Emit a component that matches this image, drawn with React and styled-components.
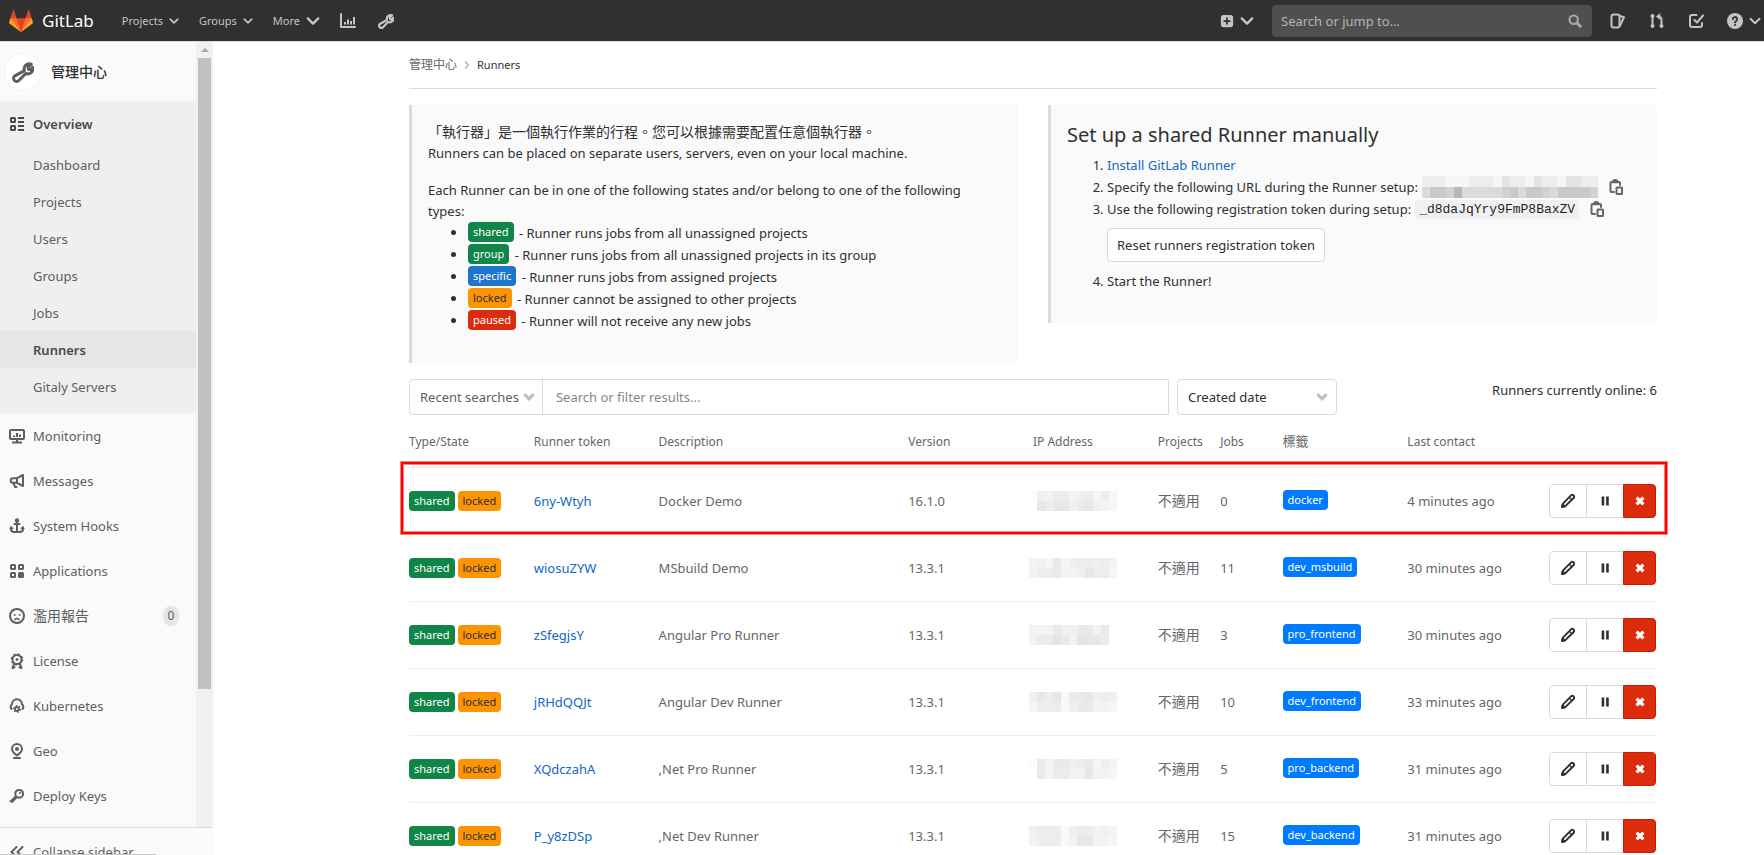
import React from "react";
import styled, { createGlobalStyle, css } from "styled-components";

const GlobalStyle = createGlobalStyle`
  * {
    box-sizing: border-box;
  }
  body {
    margin: 0;
    background: #fff;
    color: #303030;
    font-family: "Noto Sans", "Noto Sans CJK TC", sans-serif;
    font-size: 13px;
    line-height: 22px;
    overflow: hidden;
  }
  button,
  input,
  select {
    font: inherit;
    color: inherit;
    margin: 0;
  }
  a {
    color: #1068bf;
    text-decoration: none;
  }
`;

const stroke = {
  fill: "none",
  stroke: "currentColor",
  strokeWidth: 2,
  strokeLinecap: "round",
  strokeLinejoin: "round",
};

const icons = {
  chevron: <path d="M2 5l6 6 6-6" {...stroke} strokeWidth="2.6" />,
  caret: <path d="M3 5.500l5 5 5-5" {...stroke} strokeWidth="4.200" strokeLinejoin="miter" />,
  chart: (
    <g {...stroke}>
      <path d="M1 1v13h14" />
      <path d="M5 11.500V9M8 11.500V6.500M11 11.500V8M14 11.500V4" strokeLinecap="butt" />
    </g>
  ),
  wrench: (
    <g>
      <path
        d="M9 7a3.800 3.800 0 0 1 5-4.700l-2.300 2.200.3 1.600 1.600.3 1.500-1.800a3.800 3.800 0 0 1-5.100 4.500L5 14.200a2 2 0 0 1-3.200-3.200z"
        {...stroke}
        strokeWidth="2.200"
      />
    </g>
  ),
  plus: (
    <path
      fillRule="evenodd"
      fill="currentColor"
      d="M4 1h8a3 3 0 0 1 3 3v8a3 3 0 0 1-3 3H4a3 3 0 0 1-3-3V4a3 3 0 0 1 3-3zm3 3v3H4v2h3v3h2V9h3V7H9V4z"
    />
  ),
  search: (
    <g {...stroke}>
      <circle cx="6.500" cy="6.500" r="4.800" strokeWidth="2.400" />
      <path d="M10.500 10.500l3.500 3.500" strokeWidth="3.400" />
    </g>
  ),
  issues: (
    <g {...stroke}>
      <rect x="1.500" y="1.500" width="8" height="13" rx="2" />
      <path d="M10 3l4 1.200L10 12.500" />
    </g>
  ),
  merge: (
    <g {...stroke}>
      <path d="M3.500 3v10M12.500 13V6.500a3 3 0 0 0-3-3H8.500" />
      <path d="M10.500 1L8 3.500 10.500 6z" fill="currentColor" strokeWidth="1" />
      <circle cx="3.500" cy="3" r="1" />
      <circle cx="3.500" cy="13" r="1" />
      <circle cx="12.500" cy="13" r="1" />
    </g>
  ),
  todo: (
    <g {...stroke}>
      <path d="M8.500 2H4a2 2 0 0 0-2 2v8a2 2 0 0 0 2 2h8a2 2 0 0 0 2-2v-2" />
      <path d="M6.500 7L9 9.500 15 2.500" />
    </g>
  ),
  help: (
    <g>
      <circle cx="8" cy="8" r="8" fill="currentColor" />
      <path d="M5.800 6.200a2.200 2.200 0 1 1 3.300 1.900C8.300 8.500 8 8.800 8 9.400" {...stroke} stroke="#303030" strokeWidth="1.800" />
      <circle cx="8" cy="12" r="1.100" fill="#303030" />
    </g>
  ),
  overview: (
    <g {...stroke} strokeLinejoin="miter" strokeLinecap="butt">
      <rect x="2" y="2" width="4" height="4" rx=".5" />
      <rect x="2" y="10" width="4" height="4" rx=".5" />
      <path d="M9 2h6M9 6h6M9 10h6M9 14h6" />
    </g>
  ),
  monitor: (
    <g {...stroke}>
      <rect x="1" y="2" width="14" height="9" rx="1" />
      <path d="M3 14.500h10M8 11v3M5 9V7.500M8 9V5M11 9V6.500" strokeLinecap="butt" />
    </g>
  ),
  messages: (
    <g {...stroke}>
      <path d="M14 2v11L8 9.800H4A2.200 2.200 0 0 1 4 5.200h4z" />
      <path d="M8 5.200v4.600M4.500 10l1.500 4h1.500" />
    </g>
  ),
  hook: (
    <g {...stroke}>
      <circle cx="8" cy="2.500" r="1.200" fill="currentColor" />
      <path d="M8 4v10M5.500 6h5M2 9.500v1.500c0 2 1.800 3 3.500 3h5c1.700 0 3.500-1 3.500-3V9.500" />
      <path d="M1 10.500L2 9l2 1.500M15 10.500L14 9l-2 1.500" strokeWidth="1.200" />
    </g>
  ),
  apps: (
    <g {...stroke}>
      <rect x="2" y="2" width="4" height="4" rx=".5" />
      <rect x="10" y="2" width="4" height="4" rx=".5" />
      <rect x="2" y="10" width="4" height="4" rx=".5" />
      <rect x="10" y="10" width="4" height="4" rx=".5" fill="currentColor" />
    </g>
  ),
  abuse: (
    <g {...stroke}>
      <circle cx="8" cy="8" r="7" />
      <path d="M6 11.500a2.400 2.400 0 0 1 4 0" strokeWidth="1.600" />
      <circle cx="5.500" cy="7" r=".5" strokeWidth="1" />
      <circle cx="10.500" cy="7" r=".5" strokeWidth="1" />
    </g>
  ),
  license: (
    <g {...stroke}>
      <circle cx="8" cy="6.500" r="4.500" />
      <circle cx="8" cy="6.500" r="5.600" strokeWidth="1.400" strokeDasharray="2 2.400" strokeLinecap="butt" />
      <circle cx="8" cy="6.500" r="1" strokeWidth="1" fill="currentColor" />
      <path d="M5 11l-1.500 4 2-.8M11 11l1.500 4-2-.8" />
    </g>
  ),
  kubernetes: (
    <g {...stroke}>
      <path d="M2.500 11A3.200 3.200 0 0 1 3 6.200a5 5 0 0 1 10 0 3.200 3.200 0 0 1 .5 4.800" />
      <circle cx="8" cy="11" r="2" />
      <circle cx="8" cy="11" r="3.400" strokeWidth="1.200" strokeDasharray="1.500 2.060" strokeLinecap="butt" />
    </g>
  ),
  geo: (
    <g {...stroke}>
      <path d="M8 12.500C4.500 10 3 8.200 3 6a5 5 0 0 1 10 0c0 2.200-1.500 4-5 6.500zM5 15h6" />
      <circle cx="8" cy="6" r="1" fill="currentColor" />
    </g>
  ),
  key: (
    <g {...stroke}>
      <circle cx="10.200" cy="5.800" r="3.900" />
      <path d="M7.200 8.800L2 14M2 14v-1" strokeWidth="3.200" strokeLinecap="butt" />
      <circle cx="11" cy="5" r=".8" fill="currentColor" strokeWidth=".6" />
    </g>
  ),
  collapse: <path d="M7.500 3L2.500 8l5 5M13.500 3l-5 5 5 5" {...stroke} />,
  copy: (
    <g {...stroke} strokeLinejoin="miter">
      <path d="M6 13H3.500a1 1 0 0 1-1-1V4a1 1 0 0 1 1-1h7.500a1 1 0 0 1 1 1v2" />
      <path d="M5 3.200a2.200 2.200 0 0 1 4.400 0z" fill="currentColor" />
      <rect x="8.500" y="8.500" width="5.500" height="6.500" rx=".5" />
    </g>
  ),
  pencil: (
    <g {...stroke}>
      <path d="M2.500 13.500l.6-3.100 7.900-8a1.800 1.800 0 0 1 2.600 2.600l-8 7.900z" />
      <path d="M9.500 4.500l2 2" strokeWidth="1.200" />
      <path d="M2 14l.5-2.500L4.500 13.500z" fill="currentColor" />
    </g>
  ),
  pause: <path d="M3.500 2h3.500v12H3.500zM9.500 2H13v12H9.500z" fill="currentColor" />,
  close: <path d="M3.500 3.500l9 9M12.500 3.500l-9 9" {...stroke} strokeWidth="4.400" strokeLinecap="butt" />,
};

const Svg = styled.svg`
  flex: none;
  display: block;
`;

const Icon = ({ name, size = 16 }) => (
  <Svg width={size} height={size} viewBox="0 0 16 16" aria-hidden="true">
    {icons[name]}
  </Svg>
);

const Logo = () => (
  <Svg width="24" height="24" viewBox="0 0 36 36" aria-hidden="true">
    <path fill="#e24329" d="M2 14l9.380 9v-9l-4-12.280c-.205-.632-1.176-.632-1.380 0z" />
    <path fill="#e24329" d="M34 14l-9.380 9v-9l4-12.280c.205-.632 1.176-.632 1.380 0z" />
    <path fill="#e24329" d="M18 34.380L3 14h30z" />
    <path fill="#fc6d26" d="M18 34.380L11.380 14H2l4 11z" />
    <path fill="#fc6d26" d="M18 34.380L24.620 14H34l-4 11z" />
    <path fill="#fca326" d="M2 14L.1 20.160c-.18.565 0 1.200.5 1.560l17.420 12.660z" />
    <path fill="#fca326" d="M34 14l1.900 6.160c.18.565 0 1.200-.5 1.560L18 34.380z" />
  </Svg>
);

const Page = styled.div`
  display: flex;
  flex-direction: column;
  height: 100vh;
`;

const Navbar = styled.header`
  display: flex;
  align-items: center;
  justify-content: space-between;
  flex: none;
  height: 42px;
  padding: 0 3px 0 9px;
  background: #303030;
  border-bottom: 1px solid #dbdbdb;
  color: #c4c4c4;
`;

const NavGroup = styled.div`
  display: flex;
  align-items: center;
  gap: ${(p) => p.$gap}px;
`;

const Brand = styled.a`
  display: flex;
  align-items: center;
  gap: 9px;
  margin-right: 8px;
  color: #fff;
  font-size: 17px;
`;

const NavButton = styled.button`
  display: flex;
  align-items: center;
  gap: 6px;
  padding: 0;
  border: 0;
  background: none;
  font-size: 11px;
`;

const SearchBox = styled.label`
  display: flex;
  align-items: center;
  width: 320px;
  height: 32px;
  padding: 0 10px 0 9px;
  border-radius: 4px;
  background: #4f4f4f;
  color: #a8a8a8;
`;

const TextInput = styled.input`
  flex: 1;
  min-width: 0;
  padding: 0;
  border: 0;
  outline: 0;
  background: none;
  &::placeholder {
    color: ${(p) => p.$placeholder};
    opacity: 1;
  }
`;

const Body = styled.div`
  display: flex;
  flex: 1;
  min-height: 0;
`;

const Sidebar = styled.aside`
  position: relative;
  display: flex;
  flex-direction: column;
  flex: none;
  width: 213px;
  background: #fafafa;
  color: #5e5e5e;
`;

const SidebarScroll = styled.div`
  display: flex;
  flex: 1;
  min-height: 0;
`;

const SidebarNav = styled.nav`
  flex: 1;
  overflow: hidden;
`;

const Scrollbar = styled.div`
  display: flex;
  flex-direction: column;
  align-items: center;
  width: 17px;
  padding-top: 6px;
  gap: 6px;
  background: #f1f1f1;
`;

const ScrollArrow = styled.div`
  border: 4px solid transparent;
  border-top-width: 0;
  border-bottom-color: #a3a3a3;
`;

const ScrollThumb = styled.div`
  width: 13px;
  height: 81%;
  background: #c1c1c1;
`;

const ContextHeader = styled.a`
  display: flex;
  align-items: center;
  gap: 9px;
  height: 59px;
  padding-left: 4px;
  color: #303030;
  font-size: 14px;
  font-weight: 500;
`;

const Avatar = styled.span`
  display: grid;
  place-items: center;
  width: 38px;
  height: 38px;
  border: 1px solid #f2f2f2;
  border-radius: 50%;
  background: #fff;
  color: #5e5e5e;
`;

const OpenSection = styled.div`
  padding-bottom: 8px;
  background: #efefef;
`;

const SideLink = styled.a`
  display: flex;
  align-items: center;
  gap: 8px;
  height: 45px;
  padding: 0 17px 0 9px;
  color: inherit;
  ${(p) =>
    p.$active &&
    css`
      color: #4a4a4a;
      font-weight: 600;
    `}
`;

const SubLink = styled.a`
  display: flex;
  align-items: center;
  height: 37px;
  padding-left: 33px;
  color: inherit;
  ${(p) =>
    p.$active &&
    css`
      background: #e6e6e6;
      color: #4a4a4a;
      font-weight: 600;
    `}
`;

const Counter = styled.span`
  margin-left: auto;
  width: 16px;
  border-radius: 10px;
  background: #e6e6e6;
  font-size: 12px;
  line-height: 20px;
  text-align: center;
`;

const CollapseButton = styled.button`
  display: flex;
  align-items: flex-start;
  flex: none;
  gap: 8px;
  height: 28px;
  padding: 13px 0 0 9px;
  overflow: hidden;
  border: 0;
  border-top: 1px solid #dbdbdb;
  background: #fafafa;
  & svg {
    margin-top: 3px;
  }
`;

const StatusEdge = styled.div`
  position: absolute;
  left: 0;
  bottom: 0;
  width: 156px;
  height: 1px;
  background: #c8c8c8;
`;

const Main = styled.main`
  flex: 1;
  min-width: 0;
  padding: 0 107px 0 196px;
`;

const Cjk = styled.span`
  font-size: ${(p) => p.$size || 14}px;
`;

const Breadcrumb = styled.nav`
  display: flex;
  align-items: center;
  gap: 6px;
  height: 47px;
  margin-bottom: 16px;
  border-bottom: 1px solid #dbdbdb;
  font-size: 11px;
  & a {
    color: #666;
  }
  & svg {
    color: #a8a8a8;
    transform: rotate(-90deg);
  }
`;

const Panels = styled.div`
  display: flex;
  align-items: flex-start;
  gap: 30px;
  margin-bottom: 16px;
`;

const badgeColors = {
  shared: ["#108548", "#fff"],
  group: ["#108548", "#fff"],
  specific: ["#1f75cb", "#fff"],
  locked: ["#fc9403", "#303030"],
  paused: ["#dd2b0e", "#fff"],
  tag: ["#007bff", "#fff"],
};

const Badge = styled.span`
  display: inline-block;
  padding: 0 5px;
  border-radius: 4px;
  background: ${(p) => badgeColors[p.$kind][0]};
  color: ${(p) => badgeColors[p.$kind][1]};
  font-size: 11px;
  line-height: 20px;
  vertical-align: top;
`;

const Panel = styled.section`
  flex: 1;
  height: ${(p) => p.$height}px;
  padding: 16px 32px 16px 16px;
  border-left: 3px solid #dbdbdb;
  background: #fafafa;
  line-height: 21px;
  & h4 {
    margin: 0 0 5px;
    font-size: 20px;
    font-weight: 400;
    line-height: 28px;
  }
  & p {
    margin: 0 0 16px;
  }
  & ul,
  & ol {
    margin: 0;
    padding-left: 40px;
    line-height: 22px;
  }
`;

const TypeList = styled.ul`
  & li::marker {
    font-size: 14px;
  }
  & ${Badge} {
    margin-right: 2px;
  }
`;

const Step = styled.div`
  display: flex;
  align-items: center;
  gap: 4px;
  white-space: nowrap;
`;

const Code = styled.code`
  padding: 0 4px;
  border-radius: 4px;
  background: #f0f0f0;
  color: #1f1f1f;
  font-family: "Liberation Mono", monospace;
  font-size: 13px;
  line-height: 19px;
`;

const CopyButton = styled.button`
  margin-left: 6px;
  padding: 0;
  border: 0;
  background: none;
  color: #666;
`;

const ResetButton = styled.button`
  display: block;
  height: 34px;
  margin: 8px 0;
  padding: 0 9px;
  border: 1px solid #dbdbdb;
  border-radius: 4px;
  background: #fff;
`;

const MosaicGrid = styled.div`
  display: grid;
  grid-template-columns: repeat(${(p) => p.$columns}, 8px);
  grid-auto-rows: ${(p) => p.$rowHeight}px;
  width: max-content;
`;

const Mosaic = ({ rows, step = 3, rowHeight = 10 }) => (
  <MosaicGrid $columns={rows[0].length} $rowHeight={rowHeight}>
    {rows
      .join("")
      .split("")
      .map((level, index) => {
        const value = 255 - Number(level) * step;
        return <div key={index} style={{ background: `rgb(${value}, ${value}, ${value})` }} />;
      })}
  </MosaicGrid>
);

const Filters = styled.form`
  display: flex;
  align-items: flex-start;
  height: 36px;
`;

const FilterBar = styled.div`
  display: flex;
  flex: 1;
  max-width: 760px;
  height: 36px;
  margin-right: 8px;
  border: 1px solid #dbdbdb;
  border-radius: 4px 0 0 4px;
  & input {
    padding-left: 13px;
  }
`;

const RecentButton = styled.button`
  display: flex;
  align-items: center;
  gap: 4px;
  padding: 0 7px 0 10px;
  border: 0;
  border-right: 1px solid #dbdbdb;
  background: none;
  color: #5e5e5e;
  & svg {
    color: #bfbfbf;
  }
`;

const SortBox = styled.div`
  display: grid;
  align-items: center;
  width: 160px;
  height: 36px;
  color: #bfbfbf;
  & > * {
    grid-area: 1 / 1;
  }
  & svg {
    justify-self: end;
    margin-right: 9px;
    pointer-events: none;
  }
`;

const SortSelect = styled.select`
  height: 100%;
  padding: 0 10px;
  border: 1px solid #dbdbdb;
  border-radius: 4px;
  background: #fff;
  color: #303030;
  appearance: none;
`;

const Online = styled.span`
  margin-left: auto;
`;

const Table = styled.table`
  width: 100%;
  table-layout: fixed;
  border-collapse: collapse;
  color: #666;
  & th {
    height: 52px;
    padding: 2px 0 0;
    font-size: 12px;
    font-weight: 400;
    text-align: left;
  }
  & td {
    height: 67px;
    padding: 0;
    border-top: 1px solid #eee;
    white-space: nowrap;
  }
  & ${MosaicGrid} {
    margin-left: -4px;
  }
`;

const Row = styled.tr`
  position: relative;
`;

const Highlight = styled.div`
  position: absolute;
  inset: -5px -10px 0 -8px;
  border: 2px solid #f00;
  box-shadow: 0 0 0 1px #ff7f7f, inset 0 0 0 1px #ff7f7f;
  pointer-events: none;
`;

const Badges = styled.div`
  display: flex;
  gap: 3px;
`;

const Actions = styled.div`
  display: flex;
  justify-content: flex-end;
  padding-right: 1px;
`;

const ActionButton = styled.button`
  display: grid;
  place-items: center;
  width: ${(p) => (p.$danger ? 33 : 38)}px;
  height: 34px;
  margin-left: -1px;
  padding: 0;
  border: 1px solid ${(p) => (p.$danger ? "#c91c00" : "#dbdbdb")};
  background: ${(p) => (p.$danger ? "#dd2b0e" : "#fff")};
  color: ${(p) => (p.$danger ? "#fff" : "#303030")};
  &:first-child {
    border-radius: 4px 0 0 4px;
  }
  &:last-child {
    border-radius: 0 4px 4px 0;
  }
`;

const overviewLinks = ["Dashboard", "Projects", "Users", "Groups", "Jobs", "Runners", "Gitaly Servers"];

const sideLinks = [
  { icon: "monitor", label: "Monitoring" },
  { icon: "messages", label: "Messages" },
  { icon: "hook", label: "System Hooks" },
  { icon: "apps", label: "Applications" },
  { icon: "abuse", label: <Cjk>濫用報告</Cjk>, count: 0 },
  { icon: "license", label: "License" },
  { icon: "kubernetes", label: "Kubernetes" },
  { icon: "geo", label: "Geo" },
  { icon: "key", label: "Deploy Keys" },
];

const types = [
  ["shared", "Runner runs jobs from all unassigned projects"],
  ["group", "Runner runs jobs from all unassigned projects in its group"],
  ["specific", "Runner runs jobs from assigned projects"],
  ["locked", "Runner cannot be assigned to other projects"],
  ["paused", "Runner will not receive any new jobs"],
];

const columns = [
  ["Type/State", 10],
  ["Runner token", 10],
  ["Description", 20],
  ["Version", 10],
  ["IP Address", 10],
  ["Projects", 5],
  ["Jobs", 5],
  [<Cjk $size={13}>標籤</Cjk>, 10],
  ["Last contact", 10],
  ["", 10],
];

const runners = [
  { token: "6ny-Wtyh", name: "Docker Demo", version: "16.1.0", jobs: 0, tag: "docker", contact: "4 minutes ago", ip: ["15466456363", "08688578543"], highlight: true },
  { token: "wiosuZYW", name: "MSbuild Demo", version: "13.3.1", jobs: 11, tag: "dev_msbuild", contact: "30 minutes ago", ip: ["45373566564", "46674458663"] },
  { token: "zSfegjsY", name: "Angular Pro Runner", version: "13.3.1", jobs: 3, tag: "pro_frontend", contact: "30 minutes ago", ip: ["4447557747", "4679749886"] },
  { token: "jRHdQQJt", name: "Angular Dev Runner", version: "13.3.1", jobs: 10, tag: "dev_frontend", contact: "33 minutes ago", ip: ["58682778565", "36662577443"] },
  { token: "XQdczahA", name: ",Net Pro Runner", version: "13.3.1", jobs: 5, tag: "pro_backend", contact: "31 minutes ago", ip: ["17477567364", "07466448443"] },
  { token: "P_y8zDSp", name: ",Net Dev Runner", version: "13.3.1", jobs: 15, tag: "dev_backend", contact: "31 minutes ago", ip: ["56662566454", "46662488443"] },
];

const TopNav = () => (
  <Navbar>
    <NavGroup $gap={20}>
      <Brand href="#">
        <Logo />
        GitLab
      </Brand>
      <NavButton>
        Projects <Icon name="chevron" size={10} />
      </NavButton>
      <NavButton>
        Groups <Icon name="chevron" size={10} />
      </NavButton>
      <NavButton>
        More <Icon name="chevron" size={14} />
      </NavButton>
      <NavGroup $gap={22}>
        <NavButton aria-label="Analytics">
          <Icon name="chart" />
        </NavButton>
        <NavButton aria-label="Admin Area">
          <Icon name="wrench" />
        </NavButton>
      </NavGroup>
    </NavGroup>
    <NavGroup $gap={18}>
      <NavButton aria-label="New">
        <Icon name="plus" size={14} />
        <Icon name="chevron" size={14} />
      </NavButton>
      <SearchBox>
        <TextInput aria-label="Search or jump to" placeholder="Search or jump to…" $placeholder="#b5b5b5" />
        <Icon name="search" size={14} />
      </SearchBox>
      <NavGroup $gap={23}>
        <NavButton aria-label="Issues">
          <Icon name="issues" />
        </NavButton>
        <NavButton aria-label="Merge requests">
          <Icon name="merge" />
        </NavButton>
        <NavButton aria-label="To-Do List">
          <Icon name="todo" />
        </NavButton>
        <NavButton aria-label="Help">
          <Icon name="help" />
          <Icon name="chevron" size={12} />
        </NavButton>
      </NavGroup>
    </NavGroup>
  </Navbar>
);

const AdminSidebar = () => (
  <Sidebar>
    <SidebarScroll>
      <SidebarNav>
        <ContextHeader href="#">
          <Avatar>
            <Icon name="wrench" size={22} />
          </Avatar>
          管理中心
        </ContextHeader>
        <OpenSection>
          <SideLink href="#" $active>
            <Icon name="overview" />
            Overview
          </SideLink>
          {overviewLinks.map((label) => (
            <SubLink key={label} href="#" $active={label === "Runners"}>
              {label}
            </SubLink>
          ))}
        </OpenSection>
        {sideLinks.map((link) => (
          <SideLink key={link.icon} href="#">
            <Icon name={link.icon} />
            {link.label}
            {link.count !== undefined && <Counter>{link.count}</Counter>}
          </SideLink>
        ))}
      </SidebarNav>
      <Scrollbar>
        <ScrollArrow />
        <ScrollThumb />
      </Scrollbar>
    </SidebarScroll>
    <CollapseButton>
      <Icon name="collapse" />
      Collapse sidebar
    </CollapseButton>
    <StatusEdge />
  </Sidebar>
);

const RunnerRow = ({ runner }) => (
  <Row>
    <td>
      {runner.highlight && <Highlight />}
      <Badges>
        <Badge $kind="shared">shared</Badge>
        <Badge $kind="locked">locked</Badge>
      </Badges>
    </td>
    <td>
      <a href="#">{runner.token}</a>
    </td>
    <td>{runner.name}</td>
    <td>{runner.version}</td>
    <td>
      <Mosaic rows={runner.ip} />
    </td>
    <td>
      <Cjk>不適用</Cjk>
    </td>
    <td>{runner.jobs}</td>
    <td>
      <Badge $kind="tag">{runner.tag}</Badge>
    </td>
    <td>{runner.contact}</td>
    <td>
      <Actions>
        <ActionButton aria-label="Edit">
          <Icon name="pencil" />
        </ActionButton>
        <ActionButton aria-label="Pause">
          <Icon name="pause" size={12} />
        </ActionButton>
        <ActionButton aria-label="Remove" $danger>
          <Icon name="close" size={12} />
        </ActionButton>
      </Actions>
    </td>
  </Row>
);

const App = () => (
  <Page>
    <GlobalStyle />
    <TopNav />
    <Body>
      <AdminSidebar />
      <Main>
        <Breadcrumb>
          <a href="#">
            <Cjk $size={12}>管理中心</Cjk>
          </a>
          <Icon name="chevron" size={8} />
          <span>Runners</span>
        </Breadcrumb>
        <Panels>
          <Panel $height={258}>
            <p>
              <Cjk>「執行器」是一個執行作業的行程。您可以根據需要配置任意個執行器。</Cjk>
              <br />
              Runners can be placed on separate users, servers, even on your local machine.
            </p>
            Each Runner can be in one of the following states and/or belong to one of the following types:
            <TypeList>
              {types.map(([kind, text]) => (
                <li key={kind}>
                  <Badge $kind={kind}>{kind}</Badge> - {text}
                </li>
              ))}
            </TypeList>
          </Panel>
          <Panel $height={218}>
            <h4>Set up a shared Runner manually</h4>
            <ol>
              <li>
                <a href="#">Install GitLab Runner</a>
              </li>
              <li>
                <Step>
                  Specify the following URL during the Runner setup:
                  <Mosaic
                    step={9}
                    rowHeight={11}
                    rows={["2221112221322132213322", "4665844444564665466665"]}
                  />
                  <CopyButton aria-label="Copy URL">
                    <Icon name="copy" />
                  </CopyButton>
                </Step>
              </li>
              <li>
                <Step>
                  Use the following registration token during setup:
                  <Code>_d8daJqYry9FmP8BaxZV</Code>
                  <CopyButton aria-label="Copy token">
                    <Icon name="copy" />
                  </CopyButton>
                </Step>
                <ResetButton>Reset runners registration token</ResetButton>
              </li>
              <li>Start the Runner!</li>
            </ol>
          </Panel>
        </Panels>
        <Filters>
          <FilterBar>
            <RecentButton type="button">
              Recent searches <Icon name="caret" size={12} />
            </RecentButton>
            <TextInput aria-label="Filter runners" placeholder="Search or filter results..." $placeholder="#868686" />
          </FilterBar>
          <SortBox>
            <SortSelect aria-label="Sort by">
              <option>Created date</option>
            </SortSelect>
            <Icon name="caret" size={12} />
          </SortBox>
          <Online>Runners currently online: 6</Online>
        </Filters>
        <Table>
          <colgroup>
            {columns.map(([, width], index) => (
              <col key={index} width={`${width}%`} />
            ))}
          </colgroup>
          <thead>
            <tr>
              {columns.map(([label], index) => (
                <th key={index}>{label}</th>
              ))}
            </tr>
          </thead>
          <tbody>
            {runners.map((runner) => (
              <RunnerRow key={runner.token} runner={runner} />
            ))}
          </tbody>
        </Table>
      </Main>
    </Body>
  </Page>
);

export default App;
